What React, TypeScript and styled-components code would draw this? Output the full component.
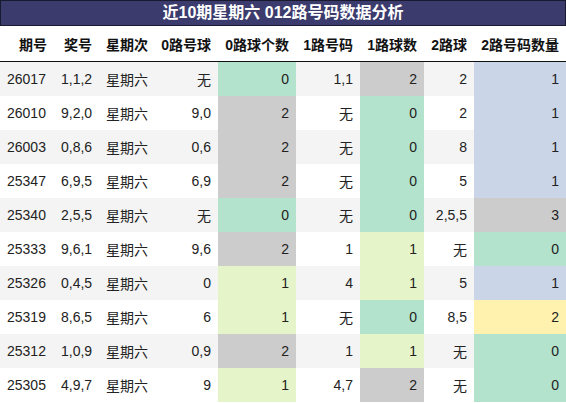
import styled, { createGlobalStyle } from "styled-components";

const GlobalStyle = createGlobalStyle`
  html, body {
    margin: 0;
    padding: 0;
    background: #ffffff;
  }
  body {
    font-family: "Liberation Sans", Arial, "Noto Sans CJK SC", sans-serif;
  }
`

const Wrap = styled.div`
  width: 566px;
  overflow: hidden;
`

const Title = styled.div`
  height: 24px;
  background: #3c3b6e;
  border: 1px solid #1a1a2e;
  color: #ffffff;
  font-weight: bold;
  font-size: 16px;
  line-height: 24px;
  text-align: center;
  font-family: "Liberation Sans", Arial, "Noto Sans CJK SC", sans-serif;
`

const Table = styled.table`
  width: 566px;
  border-collapse: collapse;
  table-layout: fixed;
  font-size: 14px;
  color: #222222;
`

const HeadCell = styled.th`
  height: 35px;
  padding: 0 7px;
  text-align: right;
  font-weight: bold;
  color: #111111;
  border-bottom: 1px solid #111111;
  white-space: nowrap;
  background: #ffffff;
`

const Row = styled.tr<{ $stripe: boolean }>`
  background: ${p => (p.$stripe ? "#f4f4f4" : "#ffffff")};
`

const Cell = styled.td<{ $align?: "left" | "right"; $bg?: string }>`
  height: 34px;
  padding: 0 7px;
  text-align: ${p => p.$align ?? "right"};
  background: ${p => p.$bg ?? "transparent"};
  white-space: nowrap;
`

const GREEN = "#b3e2cd";
const LIME = "#e6f5c9";
const GREY = "#cccccc";
const BLUE = "#cbd5e8";
const YELLOW = "#fff2ae";

const countColor = (n: number) => (n === 0 ? GREEN : n === 1 ? LIME : GREY);
const twoColor = (n: number) => [GREEN, BLUE, YELLOW, GREY][n];

const widths = [54, 45, 55, 64, 78, 64, 64, 50, 92];
const headers = ["期号", "奖号", "星期次", "0路号球", "0路球个数", "1路号码", "1路球数", "2路球", "2路号码数量"];

type Draw = [string, string, string, number, string, number, string, number];

const rows: Draw[] = [
  ["26017", "1,1,2", "无", 0, "1,1", 2, "2", 1],
  ["26010", "9,2,0", "9,0", 2, "无", 0, "2", 1],
  ["26003", "0,8,6", "0,6", 2, "无", 0, "8", 1],
  ["25347", "6,9,5", "6,9", 2, "无", 0, "5", 1],
  ["25340", "2,5,5", "无", 0, "无", 0, "2,5,5", 3],
  ["25333", "9,6,1", "9,6", 2, "1", 1, "无", 0],
  ["25326", "0,4,5", "0", 1, "4", 1, "5", 1],
  ["25319", "8,6,5", "6", 1, "无", 0, "8,5", 2],
  ["25312", "1,0,9", "0,9", 2, "1", 1, "无", 0],
  ["25305", "4,9,7", "9", 1, "4,7", 2, "无", 0],
];

export default function App() {
  return (
    <Wrap>
      <GlobalStyle />
      <Title>近10期星期六 012路号码数据分析</Title>
      <Table>
        <colgroup>
          {widths.map((w, i) => <col key={i} style={{ width: w }} />)}
        </colgroup>
        <thead>
          <tr>
            {headers.map(h => <HeadCell key={h}>{h}</HeadCell>)}
          </tr>
        </thead>
        <tbody>
          {rows.map((r, i) => (
            <Row key={r[0]} $stripe={i % 2 === 0}>
              <Cell $align="left">{r[0]}</Cell>
              <Cell $align="left">{r[1]}</Cell>
              <Cell $align="left">星期六</Cell>
              <Cell>{r[2]}</Cell>
              <Cell $bg={countColor(r[3])}>{r[3]}</Cell>
              <Cell>{r[4]}</Cell>
              <Cell $bg={countColor(r[5])}>{r[5]}</Cell>
              <Cell>{r[6]}</Cell>
              <Cell $bg={twoColor(r[7])}>{r[7]}</Cell>
            </Row>
          ))}
        </tbody>
      </Table>
    </Wrap>
  );
}
